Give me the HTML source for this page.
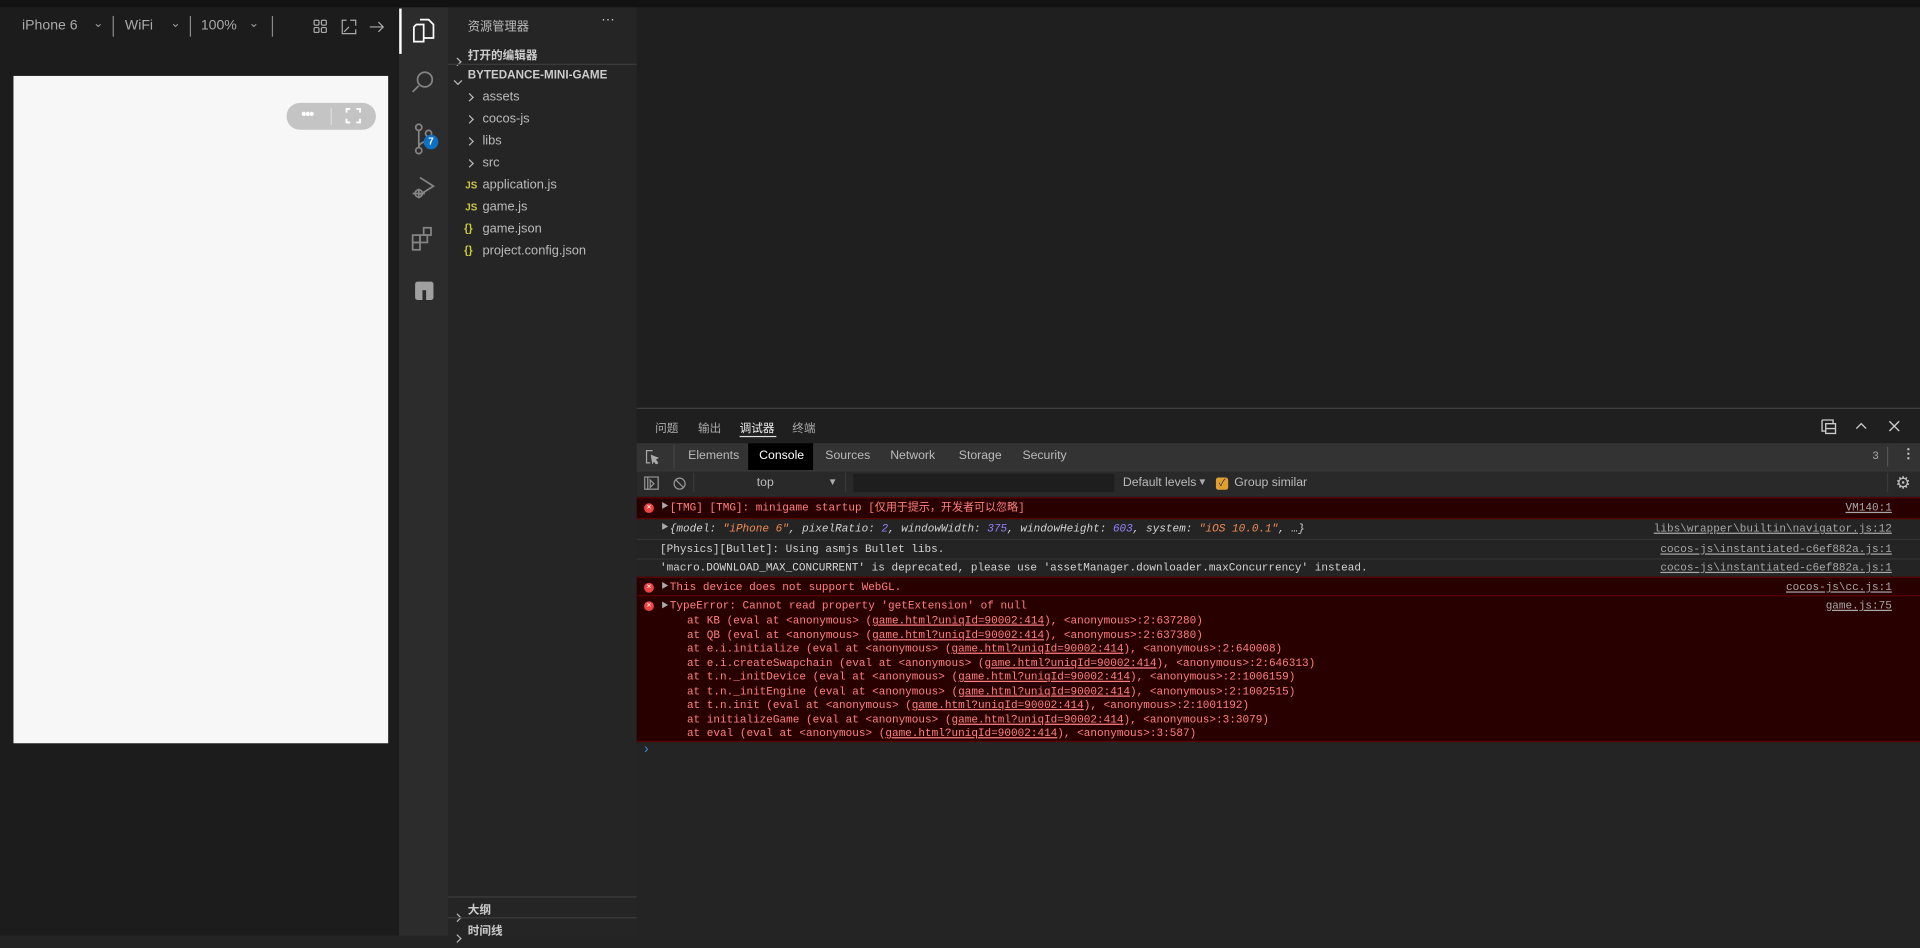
<!DOCTYPE html>
<html><head><meta charset="utf-8"><style>
html,body{margin:0;padding:0;width:1920px;height:935px;overflow:hidden;background:#242424}
#w{position:absolute;left:0;top:0;width:1568px;height:764px;transform:scale(1.22449);transform-origin:0 0;font-family:"Liberation Sans","Noto Sans CJK SC",sans-serif;color:#ccc}
.a{position:absolute}
.m{font-family:"Liberation Mono","Noto Sans CJK SC",monospace;font-size:9px;white-space:pre;line-height:11px}
.row{position:absolute;left:520px;width:1048px}
.err{background:#290000;border-top:1px solid #5c0000;color:#ff8080}
.lk{position:absolute;right:23px;color:#a8a8a8;text-decoration:underline}
.ic{position:absolute;left:6px;width:8px;height:8px;border-radius:50%;background:#e44;color:#fff;font-size:7px;line-height:8px;text-align:center;font-family:"Liberation Sans",sans-serif}
.tri{position:absolute;left:20px;color:#aaa;font-size:6px}
.u{text-decoration:underline}
.ex{font-size:10.5px;color:#bbb}
.chev{display:inline-block;width:4px;height:4px;border-right:1px solid #bbb;border-bottom:1px solid #bbb;transform:rotate(-45deg)}
</style></head><body><div id="w">
<div class="a" style="left:0;top:0;width:1568px;height:6px;background:#121212"></div>
<!-- simulator -->
<div class="a" style="left:0;top:6px;width:326px;height:758px;background:#1c1c1c"></div>
<div class="a" style="left:18px;top:15px;font-size:11.5px;color:#aaa">iPhone 6</div>
<div class="a" style="left:76px;top:14px;font-size:10px;color:#999">⌄</div>
<div class="a" style="left:92px;top:13px;width:1px;height:17px;background:#888"></div>
<div class="a" style="left:102px;top:15px;font-size:11.5px;color:#aaa">WiFi</div>
<div class="a" style="left:139px;top:14px;font-size:10px;color:#999">⌄</div>
<div class="a" style="left:155px;top:13px;width:1px;height:17px;background:#888"></div>
<div class="a" style="left:164px;top:15px;font-size:11.5px;color:#aaa">100%</div>
<div class="a" style="left:203px;top:14px;font-size:10px;color:#999">⌄</div>
<div class="a" style="left:222px;top:13px;width:1px;height:17px;background:#888"></div>
<svg class="a" style="left:255px;top:15px" width="60" height="14" fill="none" stroke="#aaa" stroke-width="1"><rect x="1.5" y="1.5" width="4" height="4" rx="1"/><rect x="7.5" y="1.5" width="4" height="4" rx="1"/><rect x="1.5" y="7.5" width="4" height="4" rx="1"/><rect x="7.5" y="7.5" width="4" height="4" rx="1"/><path d="M28 1.5h-3.5v11h11V9M31 1.5h4.5V6M26 11l4-4"/><path d="M47 7h11M54 3l4 4-4 4"/></svg>
<div class="a" style="left:11px;top:62px;width:306px;height:545px;background:#f7f7f7"></div>
<div class="a" style="left:234px;top:84px;width:73px;height:22px;border-radius:11px;background:#c4c4c4"></div>
<div class="a" style="left:246px;top:86px;font-size:12px;color:#fff;font-weight:bold;letter-spacing:-1px">•••</div>
<div class="a" style="left:270px;top:88px;width:1px;height:14px;background:#ddd"></div>
<svg class="a" style="left:282px;top:88px" width="13" height="13" fill="none" stroke="#fff" stroke-width="1.5"><path d="M1 4V1h3M9 1h3v3M12 9v3H9M4 12H1V9"/></svg>
<!-- activity bar -->
<div class="a" style="left:326px;top:6px;width:40px;height:758px;background:#2c2c2c"></div>
<div class="a" style="left:326px;top:7px;width:2px;height:37px;background:#fff"></div>
<svg class="a" style="left:334px;top:12px" width="26" height="240" fill="none" stroke="#858585" stroke-width="1.4">
<path stroke="#fff" d="M6 8h6v14H4V10zM9 4h7l4 4v11h-8" /><circle cx="13" cy="53" r="6"/><path d="M8 58l-5 5"/>
<circle cx="8" cy="92" r="2.5"/><circle cx="8" cy="111" r="2.5"/><circle cx="16" cy="97" r="2.5"/><path d="M8 94.5v14M16 99.5c0 5-8 4-8 9"/>
<path d="M9 133l11 7-11 7"/><circle cx="8" cy="146" r="3"/><path d="M3 146h10M8 142v8"/>
<rect x="3" y="180" width="6" height="6"/><rect x="9" y="180" width="6" height="6"/><rect x="3" y="186" width="6" height="6"/><rect x="12" y="174" width="6" height="6"/></svg>
<div class="a" style="left:346px;top:110px;width:12px;height:12px;border-radius:50%;background:#0e70c0;color:#fff;font-size:8px;line-height:12px;text-align:center;font-weight:bold">7</div>
<div class="a" style="left:339px;top:230px;width:15px;height:15px;border-radius:2px;background:#a0a0a0"></div>
<div class="a" style="left:345px;top:237px;width:3px;height:8px;background:#2c2c2c"></div>
<!-- explorer -->
<div class="a" style="left:366px;top:6px;width:154px;height:758px;background:#252526"></div>
<div class="a" style="left:382px;top:13px;font-size:10px;color:#bbb">资源管理器</div>
<div class="a" style="left:491px;top:10px;font-size:11px;color:#ccc">···</div>
<div class="a" style="left:371px;top:40px"><span class="chev"></span></div>
<div class="a" style="left:382px;top:37px;font-size:9.5px;font-weight:bold;color:#ccc">打开的编辑器</div>
<div class="a" style="left:366px;top:52px;width:154px;height:1px;background:#3c3c3c"></div>
<div class="a" style="left:373px;top:57px;transform:rotate(90deg)"><span class="chev"></span></div>
<div class="a" style="left:382px;top:56px;font-size:9.5px;font-weight:bold;color:#ccc">BYTEDANCE-MINI-GAME</div>
<div class="a ex" style="left:381px;top:73px"><span class="chev"></span></div><div class="a ex" style="left:394px;top:73px">assets</div>
<div class="a ex" style="left:381px;top:91px"><span class="chev"></span></div><div class="a ex" style="left:394px;top:91px">cocos-js</div>
<div class="a ex" style="left:381px;top:109px"><span class="chev"></span></div><div class="a ex" style="left:394px;top:109px">libs</div>
<div class="a ex" style="left:381px;top:127px"><span class="chev"></span></div><div class="a ex" style="left:394px;top:127px">src</div>
<div class="a" style="left:380px;top:147px;font-size:8px;font-weight:bold;color:#cbcb41">JS</div><div class="a ex" style="left:394px;top:145px">application.js</div>
<div class="a" style="left:380px;top:165px;font-size:8px;font-weight:bold;color:#cbcb41">JS</div><div class="a ex" style="left:394px;top:163px">game.js</div>
<div class="a" style="left:379px;top:181px;font-size:9px;font-weight:bold;color:#cbcb41">{}</div><div class="a ex" style="left:394px;top:181px">game.json</div>
<div class="a" style="left:379px;top:199px;font-size:9px;font-weight:bold;color:#cbcb41">{}</div><div class="a ex" style="left:394px;top:199px">project.config.json</div>
<div class="a" style="left:366px;top:732px;width:154px;height:1px;background:#3c3c3c"></div>
<div class="a" style="left:371px;top:739px"><span class="chev"></span></div>
<div class="a" style="left:382px;top:735px;font-size:9.5px;font-weight:bold;color:#ccc">大纲</div>
<div class="a" style="left:366px;top:749px;width:154px;height:1px;background:#3c3c3c"></div>
<div class="a" style="left:371px;top:756px"><span class="chev"></span></div>
<div class="a" style="left:382px;top:752px;font-size:9.5px;font-weight:bold;color:#ccc">时间线</div>
<!-- editor -->
<div class="a" style="left:520px;top:6px;width:1048px;height:327px;background:#1f1f1f"></div>
<div class="a" style="left:520px;top:333px;width:1048px;height:1px;background:#404040"></div>
<div class="a" style="left:520px;top:334px;width:1048px;height:28px;background:#1f1f1f"></div>
<div class="a" style="left:535px;top:342px;font-size:9.5px;color:#aaa">问题</div>
<div class="a" style="left:570px;top:342px;font-size:9.5px;color:#aaa">输出</div>
<div class="a" style="left:604px;top:342px;font-size:9.5px;color:#eee">调试器</div>
<div class="a" style="left:604px;top:356px;width:30px;height:1px;background:#ddd"></div>
<div class="a" style="left:647px;top:342px;font-size:9.5px;color:#aaa">终端</div>
<svg class="a" style="left:1486px;top:341px" width="70" height="14" fill="none" stroke="#ccc" stroke-width="1.1"><path d="M2 2h9v3M2 2v9h3M5 5h8v8H5zM5 9h8"/><path d="M30 9l4-4 4 4M57 3l8 8M65 3l-8 8"/></svg>
<!-- devtools tabs -->
<div class="a" style="left:520px;top:362px;width:1048px;height:22px;background:#333"></div>
<svg class="a" style="left:527px;top:367px" width="12" height="12" fill="none" stroke="#aaa" stroke-width="1"><path d="M6 1H1v10h3"/><path d="M5 5l5 2-2 1 2 3-1 1-2-3-1 2z" fill="#aaa"/></svg>
<div class="a" style="left:550px;top:363px;width:1px;height:20px;background:#444"></div>
<div class="a" style="left:611px;top:362px;width:53px;height:22px;background:#000"></div>
<div class="a" style="left:562px;top:367px;font-size:10px;color:#bbb">Elements</div>
<div class="a" style="left:620px;top:367px;font-size:10px;color:#fff">Console</div>
<div class="a" style="left:674px;top:367px;font-size:10px;color:#bbb">Sources</div>
<div class="a" style="left:727px;top:367px;font-size:10px;color:#bbb">Network</div>
<div class="a" style="left:783px;top:367px;font-size:10px;color:#bbb">Storage</div>
<div class="a" style="left:835px;top:367px;font-size:10px;color:#bbb">Security</div>
<div class="a m" style="left:1529px;top:368px;color:#aaa">3</div>
<div class="a" style="left:1541px;top:365px;width:1px;height:16px;background:#555"></div>
<div class="a" style="left:1553px;top:364px;font-size:11px;color:#ccc;font-weight:bold">⋮</div>
<!-- filter bar -->
<div class="a" style="left:520px;top:384px;width:1048px;height:20px;background:#292929;border-top:1px solid #3a3a3a;border-bottom:1px solid #444"></div>
<svg class="a" style="left:526px;top:389px" width="40" height="12" fill="none" stroke="#999" stroke-width="1"><rect x="0.5" y="0.5" width="11" height="10"/><path d="M3 1v10M5 3l3 3-3 3z"/><circle cx="29" cy="6" r="4.5"/><path d="M26 3l6 6"/></svg>
<div class="a" style="left:566px;top:386px;width:1px;height:16px;background:#3a3a3a"></div>
<div class="a" style="left:618px;top:389px;font-size:10px;color:#bbb">top</div>
<div class="a" style="left:676px;top:389px;font-size:8px;color:#aaa">▼</div>
<div class="a" style="left:690px;top:386px;width:1px;height:16px;background:#3a3a3a"></div>
<div class="a" style="left:697px;top:387px;width:213px;height:15px;background:#1e1e1e"></div>
<div class="a" style="left:917px;top:389px;font-size:10px;color:#bbb">Default levels</div>
<div class="a" style="left:978px;top:389px;font-size:8px;color:#aaa">▼</div>
<div class="a" style="left:993px;top:390px;width:10px;height:10px;border-radius:2px;background:#e0a030;color:#333;font-size:8px;line-height:10px;text-align:center">✓</div>
<div class="a" style="left:1008px;top:389px;font-size:10px;color:#bbb">Group similar</div>
<div class="a" style="left:1541px;top:386px;width:1px;height:16px;background:#3a3a3a"></div>
<div class="a" style="left:1548px;top:386px;font-size:14px;color:#bbb">⚙</div>
<!-- console -->
<div class="a" style="left:520px;top:405px;width:1048px;height:359px;background:#242424"></div>
<div class="row err m" style="top:406px;height:16px"><div class="ic" style="top:4px">×</div><span class="tri" style="top:1px">▶</span><span class="a" style="left:27px;top:3px">[TMG] [TMG]: minigame startup [仅用于提示，开发者可以忽略]</span><span class="lk" style="top:3px">VM140:1</span></div>
<div class="row m" style="top:423px;height:16px;border-top:1px solid #5c0000;color:#d4d4d4"><span class="tri" style="top:1px">▶</span><span class="a" style="left:27px;top:3px;font-style:italic">{model: <span style="color:#f28b54">"iPhone 6"</span>, pixelRatio: <span style="color:#9980ff">2</span>, windowWidth: <span style="color:#9980ff">375</span>, windowHeight: <span style="color:#9980ff">603</span>, system: <span style="color:#f28b54">"iOS 10.0.1"</span>, …}</span><span class="lk" style="top:3px">libs\wrapper\builtin\navigator.js:12</span></div>
<div class="row m" style="top:440px;height:16px;border-top:1px solid #333;color:#d4d4d4"><span class="a" style="left:19px;top:3px">[Physics][Bullet]: Using asmjs Bullet libs.</span><span class="lk" style="top:3px">cocos-js\instantiated-c6ef882a.js:1</span></div>
<div class="row m" style="top:456px;height:15px;border-top:1px solid #333;color:#d4d4d4"><span class="a" style="left:19px;top:2px">'macro.DOWNLOAD_MAX_CONCURRENT' is deprecated, please use 'assetManager.downloader.maxConcurrency' instead.</span><span class="lk" style="top:2px">cocos-js\instantiated-c6ef882a.js:1</span></div>
<div class="row err m" style="top:471px;height:15px"><div class="ic" style="top:4px">×</div><span class="tri" style="top:1px">▶</span><span class="a" style="left:27px;top:3px">This device does not support WebGL.</span><span class="lk" style="top:3px">cocos-js\cc.js:1</span></div>
<div class="row err m" style="top:486px;height:118px;border-bottom:1px solid #5c0000"><div class="ic" style="top:4px">×</div><span class="tri" style="top:2px">▶</span><span class="a" style="left:27px;top:3px">TypeError: Cannot read property 'getExtension' of null</span>
<span class="a" style="left:41px;top:15px;line-height:11.5px">at KB (eval at &lt;anonymous&gt; (<span class="u">game.html?uniqId=90002:414</span>), &lt;anonymous&gt;:2:637280)
at QB (eval at &lt;anonymous&gt; (<span class="u">game.html?uniqId=90002:414</span>), &lt;anonymous&gt;:2:637380)
at e.i.initialize (eval at &lt;anonymous&gt; (<span class="u">game.html?uniqId=90002:414</span>), &lt;anonymous&gt;:2:640008)
at e.i.createSwapchain (eval at &lt;anonymous&gt; (<span class="u">game.html?uniqId=90002:414</span>), &lt;anonymous&gt;:2:646313)
at t.n._initDevice (eval at &lt;anonymous&gt; (<span class="u">game.html?uniqId=90002:414</span>), &lt;anonymous&gt;:2:1006159)
at t.n._initEngine (eval at &lt;anonymous&gt; (<span class="u">game.html?uniqId=90002:414</span>), &lt;anonymous&gt;:2:1002515)
at t.n.init (eval at &lt;anonymous&gt; (<span class="u">game.html?uniqId=90002:414</span>), &lt;anonymous&gt;:2:1001192)
at initializeGame (eval at &lt;anonymous&gt; (<span class="u">game.html?uniqId=90002:414</span>), &lt;anonymous&gt;:3:3079)
at eval (eval at &lt;anonymous&gt; (<span class="u">game.html?uniqId=90002:414</span>), &lt;anonymous&gt;:3:587)</span><span class="lk" style="top:3px">game.js:75</span></div>
<div class="a" style="left:526px;top:606px;font-size:11px;color:#3a8ee6">›</div>
</div></body></html>
